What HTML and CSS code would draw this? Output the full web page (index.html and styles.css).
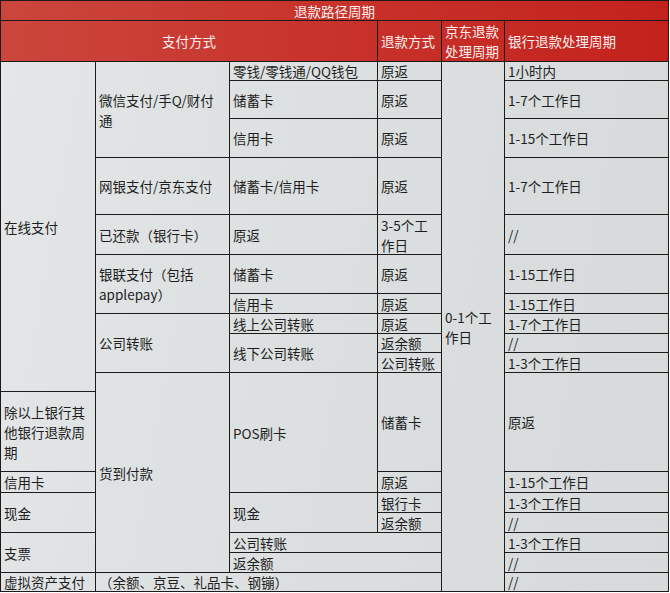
FILE: index.html
```html
<!DOCTYPE html>
<html lang="zh-CN">
<head>
<meta charset="utf-8">
<title>退款路径周期</title>
<link rel="stylesheet" href="styles.css">
</head>
<body>
<div class="sheet">
  <div class="cell head cs6 center">退款路径周期</div>
  <div class="cell head cs3 center">支付方式</div>
  <div class="cell head">退款方式</div>
  <div class="cell head multi">京东退款<br>处理周期</div>
  <div class="cell head">银行退款处理周期</div>

  <div class="cell rs11">在线支付</div>
  <div class="cell rs3 multi">微信支付/手Q/财付<br>通</div>
  <div class="cell">零钱/零钱通/QQ钱包</div>
  <div class="cell">原返</div>
  <div class="cell rs18 multi">0-1个工<br>作日</div>
  <div class="cell">1小时内</div>

  <div class="cell">储蓄卡</div>
  <div class="cell">原返</div>
  <div class="cell">1-7个工作日</div>

  <div class="cell">信用卡</div>
  <div class="cell">原返</div>
  <div class="cell">1-15个工作日</div>

  <div class="cell">网银支付/京东支付</div>
  <div class="cell">储蓄卡/信用卡</div>
  <div class="cell">原返</div>
  <div class="cell">1-7个工作日</div>

  <div class="cell">已还款（银行卡）</div>
  <div class="cell">原返</div>
  <div class="cell multi">3-5个工<br>作日</div>
  <div class="cell">//</div>

  <div class="cell rs2 multi">银联支付（包括<br>applepay）</div>
  <div class="cell">储蓄卡</div>
  <div class="cell">原返</div>
  <div class="cell">1-15工作日</div>

  <div class="cell">信用卡</div>
  <div class="cell">原返</div>
  <div class="cell">1-15工作日</div>

  <div class="cell rs3">公司转账</div>
  <div class="cell">线上公司转账</div>
  <div class="cell">原返</div>
  <div class="cell">1-7个工作日</div>

  <div class="cell rs2">线下公司转账</div>
  <div class="cell">返余额</div>
  <div class="cell">//</div>

  <div class="cell">公司转账</div>
  <div class="cell">1-3个工作日</div>

  <div class="cell rs7">货到付款</div>
  <div class="cell rs3">POS刷卡</div>
  <div class="cell rs2">储蓄卡</div>
  <div class="cell rs2">原返</div>

  <div class="cell multi">除以上银行其<br>他银行退款周<br>期</div>

  <div class="cell">信用卡</div>
  <div class="cell">原返</div>
  <div class="cell">1-15个工作日</div>

  <div class="cell rs2">现金</div>
  <div class="cell rs2">现金</div>
  <div class="cell">银行卡</div>
  <div class="cell">1-3个工作日</div>

  <div class="cell">返余额</div>
  <div class="cell">//</div>

  <div class="cell rs2">支票</div>
  <div class="cell cs2">公司转账</div>
  <div class="cell">1-3个工作日</div>

  <div class="cell cs2">返余额</div>
  <div class="cell">//</div>

  <div class="cell">虚拟资产支付</div>
  <div class="cell cs3">（余额、京豆、礼品卡、钢镚）</div>
  <div class="cell">//</div>
</div>
</body>
</html>
```

FILE: styles.css
```css
html, body {
  margin: 0;
  padding: 0;
  background: #ffffff;
}

.sheet {
  display: grid;
  width: 669px;
  box-sizing: border-box;
  padding: 1px;
  gap: 1px;
  background: #1b1b1b;
  grid-template-columns: 94px 133px 147px 63px 62px 163px;
  grid-template-rows: 19px 40px 18px 37px 38px 56px 39px 38px 19px 19px 18px 19px 18px 79px 20px 19px 19px 19px 19px 18px;
  font-family: "Noto Sans CJK SC", "Noto Sans", sans-serif;
  font-size: 13.5px;
  color: #1e1e1e;
}

.cell {
  display: flex;
  align-items: center;
  padding-left: 3px;
  line-height: 18px;
  white-space: nowrap;
  background: linear-gradient(100deg, #e4e6e7 0%, #dbdfdf 50%, #d6dada 100%) fixed;
  min-width: 0;
  min-height: 0;
}

.multi {
  line-height: 20px;
}

.head {
  background: linear-gradient(90deg, #cb463c 0%, #c8342c 45%, #c3221c 100%) fixed;
  color: #fbeeee;
}

.center {
  justify-content: center;
  padding-left: 0;
}

.cs2 { grid-column: span 2; }
.cs3 { grid-column: span 3; }
.cs6 { grid-column: span 6; }

.rs2 { grid-row: span 2; }
.rs3 { grid-row: span 3; }
.rs7 { grid-row: span 7; }
.rs11 { grid-row: span 11; }
.rs18 { grid-row: span 18; }
```
